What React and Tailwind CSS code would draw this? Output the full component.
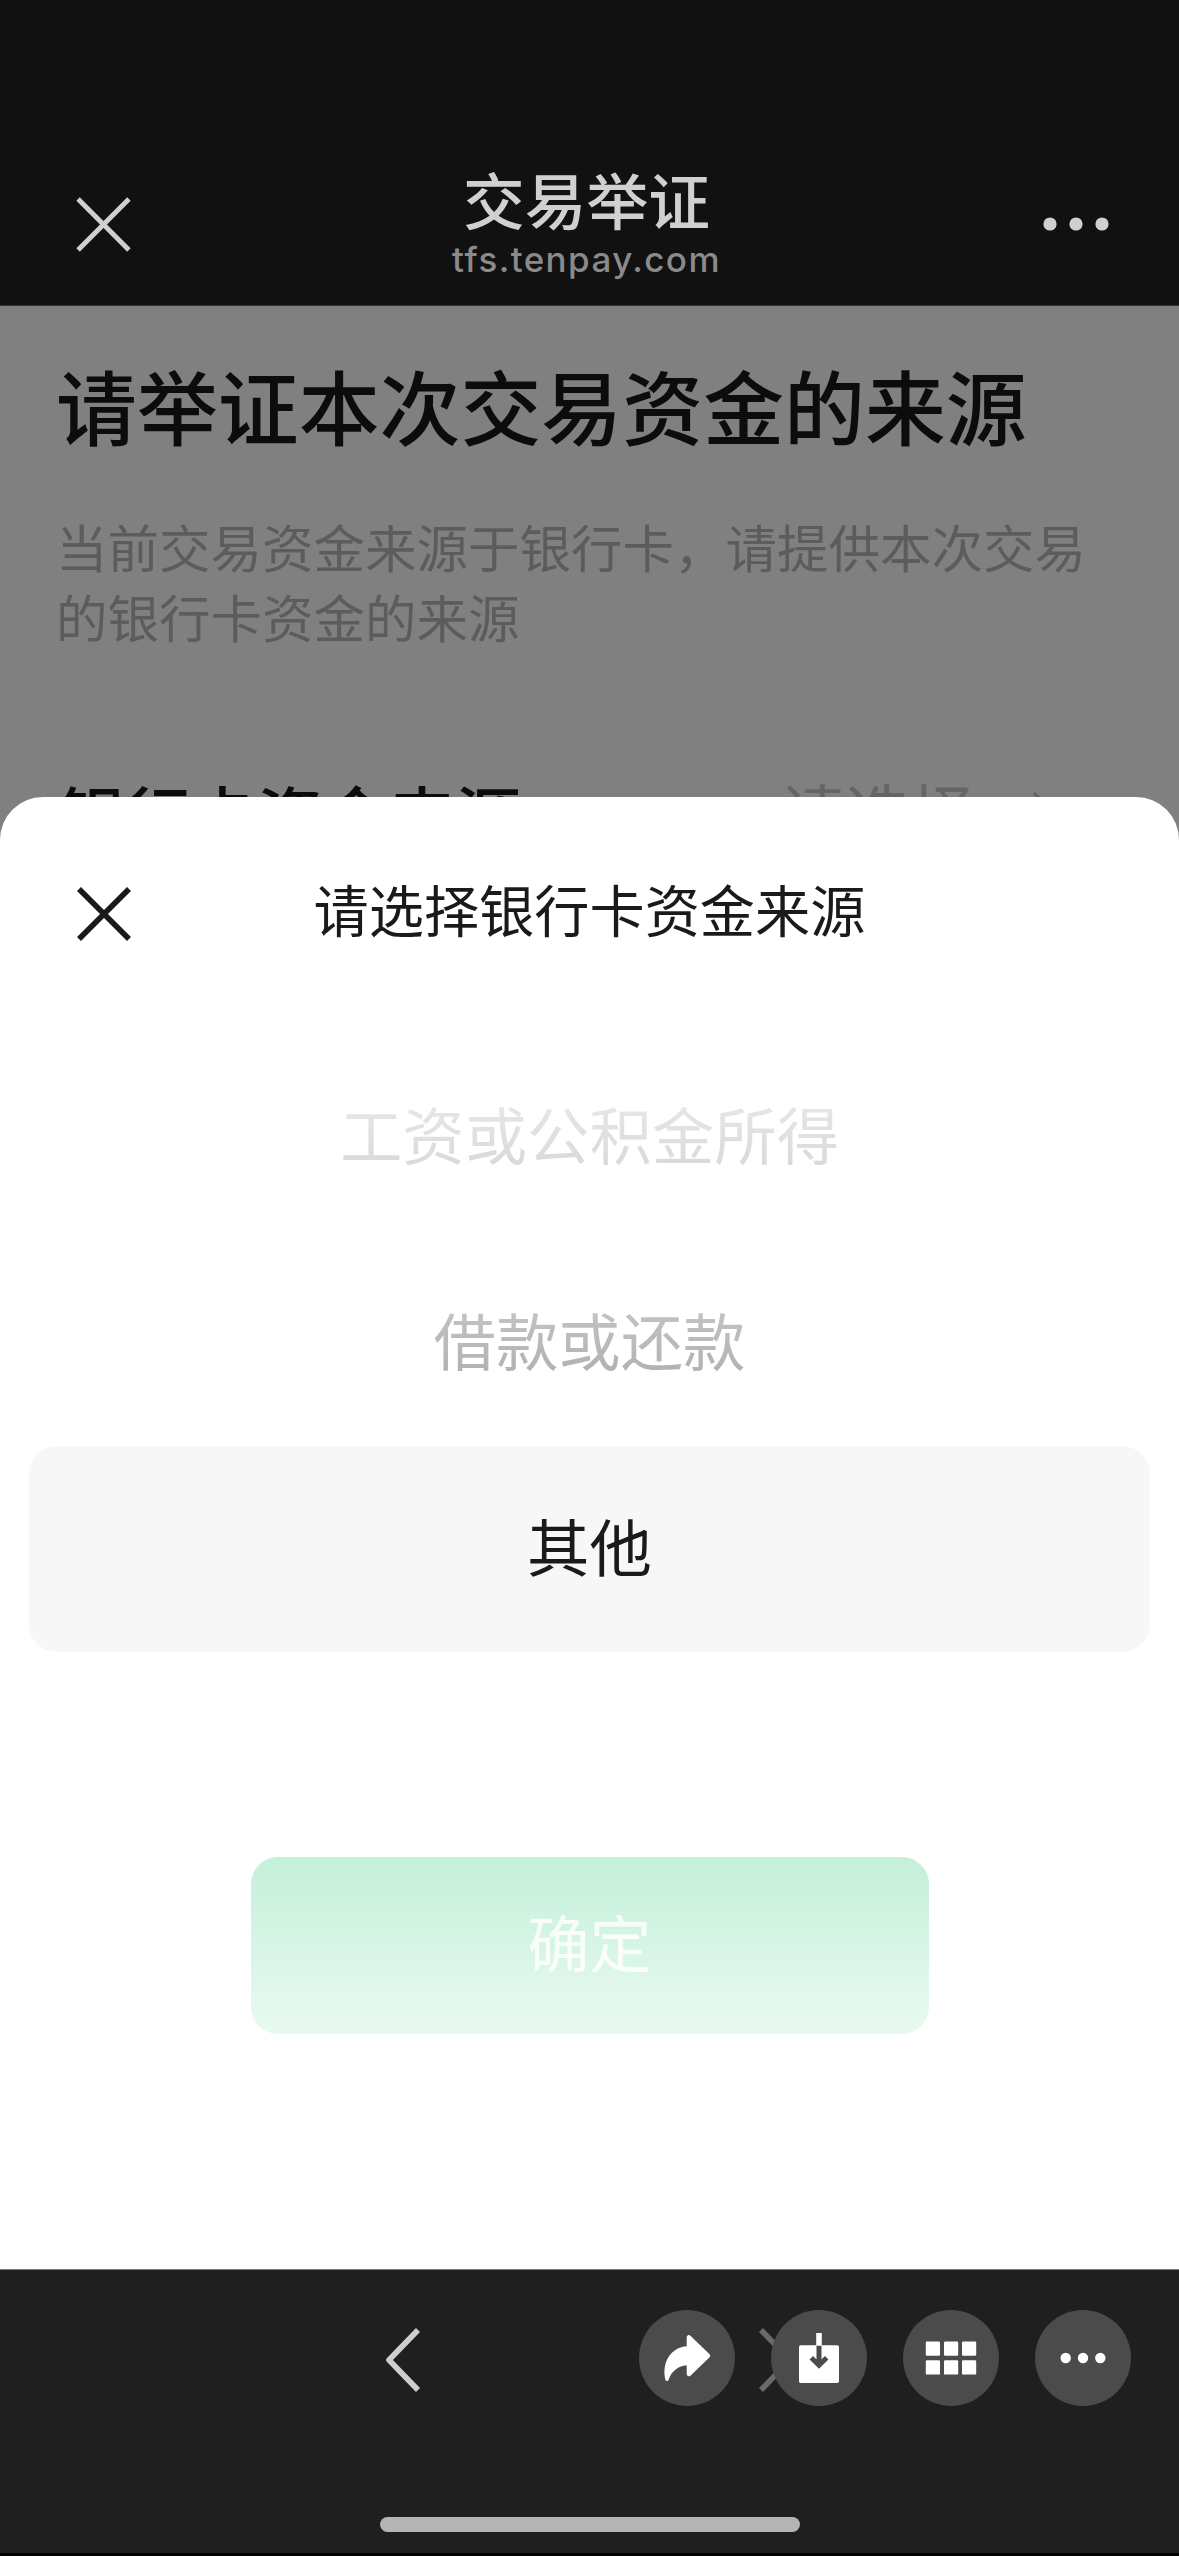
const options = [
  { label: '工资或公积金所得', className: 'from-[#e9e9e9] to-[#d8d8d8]' },
  { label: '借款或还款', className: 'from-[#c6c6c6] to-[#b0b0b0]' },
];

function CloseIcon({ className }) {
  return (
    <svg viewBox="0 0 56 56" className={className} fill="none" stroke="currentColor">
      <path d="M3 3 53 53M53 3 3 53" />
    </svg>
  );
}

function Dots({ className }) {
  return (
    <svg viewBox="0 0 66 16" className={className} fill="currentColor">
      <circle cx="7" cy="8" r="6.6" />
      <circle cx="33" cy="8" r="6.6" />
      <circle cx="59" cy="8" r="6.6" />
    </svg>
  );
}

function Chevron({ className }) {
  return (
    <svg viewBox="0 0 36 66" className={className} fill="none" stroke="currentColor" strokeWidth="5.6">
      <path d="M33 3 4 33 33 63" strokeLinejoin="round" />
    </svg>
  );
}

function RoundButton({ label, children }) {
  return (
    <button aria-label={label} className="size-24 rounded-full bg-[#4b4b4b] text-white">
      <svg viewBox="0 0 96 96" className="size-24" fill="currentColor">
        {children}
      </svg>
    </button>
  );
}

function Header() {
  return (
    <header className="flex h-[306px] items-start justify-between border-b border-[#333] bg-[#111] px-[75px] text-[#d0d0d0]">
      <button aria-label="关闭" className="mt-[196px] flex w-[66px]">
        <CloseIcon className="size-[57px] stroke-[4.8]" />
      </button>
      <div className="mt-[163px] flex flex-col items-center pr-[6px]">
        <h1 className="text-[61.8px] leading-[70px] font-medium">交易举证</h1>
        <p className="mt-[5px] font-['Inter'] text-[35px] leading-[42px] font-medium tracking-[1.4px] text-[#8a8a8a]">
          tfs.tenpay.com
        </p>
      </div>
      <button aria-label="更多" className="mt-[216px] flex">
        <Dots className="h-4 w-[66px] translate-x-[5px]" />
      </button>
    </header>
  );
}

function Question() {
  return (
    <section className="pt-[53px] pl-[56px]">
      <h2 className="text-[80.9px] leading-[90px] font-medium whitespace-nowrap text-[#0c0c0c]">
        请举证本次交易资金的来源
      </h2>
      <p className="mt-[62px] w-[1040px] text-[51.5px] leading-[70px] text-[#5c5c5c]">
        当前交易资金来源于银行卡，请提供本次交易的银行卡资金的来源
      </p>
      <div className="mt-[120px] flex items-center justify-between pr-[125px] pl-[3px] leading-[80px]">
        <span className="pb-[4px] text-[66px] font-medium text-[#0c0c0c]">银行卡资金来源</span>
        <span className="flex items-center gap-[57px] text-[#656565]">
          <span className="pb-[7px] text-[65px]">请选择</span>
          <Chevron className="mb-[7px] h-[40px] w-[22px] rotate-180" />
        </span>
      </div>
    </section>
  );
}

function SourceSheet() {
  return (
    <div className="absolute inset-x-0 bottom-0 flex h-[1472px] flex-col rounded-t-[43px] bg-white text-[#1a1a1a]">
      <div className="flex h-[228px] items-center justify-between px-[76px]">
        <button aria-label="关闭" className="flex w-14 pt-[6px]">
          <CloseIcon className="size-14 stroke-[5.6]" />
        </button>
        <h3 className="pb-[7px] text-[55.2px] leading-[64px]">请选择银行卡资金来源</h3>
        <span className="w-14" />
      </div>
      <ul className="mx-[29px] mt-[9px] text-center text-[62.4px] leading-[80px]">
        {options.map((option) => (
          <li key={option.label} className="flex h-[206px] items-center justify-center pb-[8px]">
            <span className={`bg-linear-to-b bg-clip-text text-transparent ${option.className}`}>
              {option.label}
            </span>
          </li>
        ))}
        <li className="flex h-[206px] items-center justify-center rounded-[28px] bg-[#f7f7f7] pb-[8px]">其他</li>
      </ul>
      <button className="mt-[205px] h-[177px] w-[678px] self-center rounded-[27px] bg-linear-to-b from-[#c4f0da] to-[#e9faf1] pb-[8px] text-[62px] text-white/85">
        确定
      </button>
    </div>
  );
}

function BottomBar() {
  return (
    <footer className="relative h-[287px] border-t border-b-[3px] border-t-[#7a7f7a] border-b-black bg-[#1f1f1f]">
      <div className="flex justify-between px-[385px] pt-[57px]">
        <Chevron className="h-[66px] w-[36px] text-[#cfcfcf]" />
        <Chevron className="h-[66px] w-[36px] rotate-180 text-[#6a6a6a]" />
      </div>
      <div className="absolute top-10 right-12 flex gap-9">
        <RoundButton label="转发">
          <path d="M47.7 36.3V27.5c0-2.4 2.4-3.2 4-1.6L70.6 44.2q1.5 1.5 0 3L51.7 65.4c-1.6 1.6-4 .8-4-1.6V55.3C39.5 56 32.5 61 29.6 69.8c-.6 1.9-2.9 1.7-3.3-.3C22.5 51 33 37.3 47.7 36.3Z" />
        </RoundButton>
        <RoundButton label="保存">
          <path d="M45.2 23h5.6v12h-5.6z" />
          <rect x="28" y="35.2" width="40" height="37.8" rx="1.8" />
          <path d="M48 36v18M40.3 47.8 48 55.2l7.7-7.4" fill="none" stroke="#4b4b4b" strokeWidth="5" />
        </RoundButton>
        <RoundButton label="全部">
          {[31.5, 50.3].map((y) =>
            [22.8, 41, 59].map((x) => <rect key={`${x}-${y}`} x={x} y={y} width="14.2" height="14.3" rx="1.2" />)
          )}
        </RoundButton>
        <RoundButton label="更多">
          <circle cx="30.7" cy="48" r="5.2" />
          <circle cx="48" cy="48" r="5.2" />
          <circle cx="65.3" cy="48" r="5.2" />
        </RoundButton>
      </div>
      <div className="mx-auto mt-[124px] h-[15px] w-[420px] rounded-full bg-[#b4b4b4]" />
    </footer>
  );
}

export default function App() {
  return (
    <div className="flex h-[2556px] w-[1179px] flex-col overflow-hidden font-['Noto_Sans_CJK_SC',sans-serif]">
      <Header />
      <main className="relative h-[1963px] bg-[#808080]">
        <Question />
        <SourceSheet />
      </main>
      <BottomBar />
    </div>
  );
}
